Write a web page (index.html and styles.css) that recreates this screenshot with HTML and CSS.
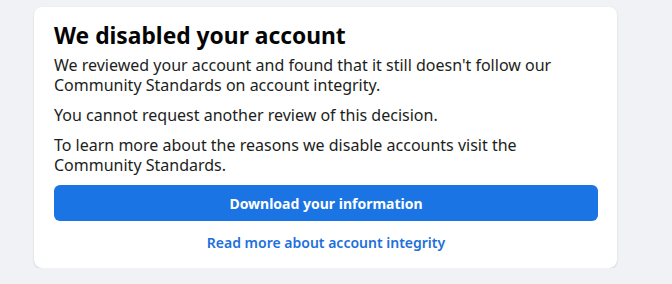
FILE: index.html
```html
<!DOCTYPE html>
<html lang="en">
<head>
<meta charset="utf-8">
<title>We disabled your account</title>
<link rel="stylesheet" href="styles.css">
</head>
<body>
<main class="page">
  <section class="card">
    <h1 class="title">We disabled your account</h1>
    <p class="text">We reviewed your account and found that it still doesn't follow our Community Standards on account integrity.</p>
    <p class="text">You cannot request another review of this decision.</p>
    <p class="text">To learn more about the reasons we disable accounts visit the Community Standards.</p>
    <button class="primary" type="button">Download your information</button>
    <a class="link" href="#">Read more about account integrity</a>
  </section>
</main>
</body>
</html>
```
FILE: styles.css
```css
html, body {
  margin: 0;
  padding: 0;
  background: #f0f2f5;
}
body {
  font-family: "Noto Sans", "Open Sans", sans-serif;
  color: #1c1e21;
}
.page {
  padding: 7px 0 0 34px;
}
.card {
  width: 583px;
  box-sizing: border-box;
  background: #fff;
  border-radius: 8px;
  box-shadow: 0 1px 2px rgba(0, 0, 0, 0.15);
  padding: 14px 19px 15px 20px;
  display: flex;
  flex-direction: column;
}
.title {
  margin: 0 0 4px;
  font-size: 22.8px;
  line-height: 30px;
  font-weight: 700;
  color: #050505;
}
.text {
  margin: 0 0 10px;
  font-size: 16px;
  line-height: 20px;
  color: #1c1e21;
}
.primary {
  height: 36px;
  border: 0;
  border-radius: 6px;
  background: #1b74e4;
  color: #fff;
  font-family: inherit;
  font-size: 14px;
  font-weight: 700;
}
.link {
  align-self: center;
  margin-top: 12px;
  font-size: 14px;
  font-weight: 600;
  line-height: 20px;
  color: #216fdb;
  text-decoration: none;
}
```
